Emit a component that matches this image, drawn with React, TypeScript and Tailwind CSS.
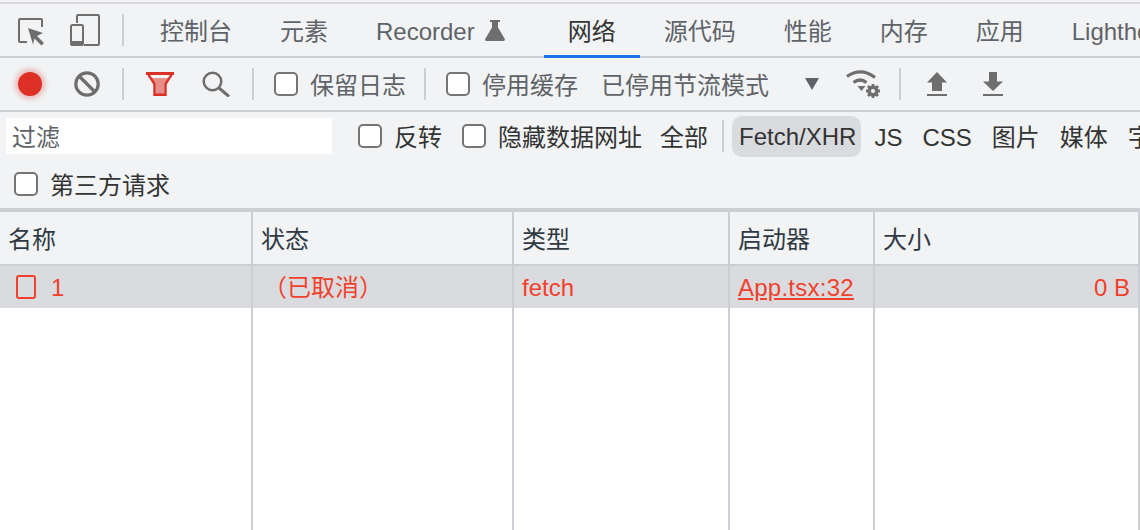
const font = "font-['Liberation_Sans','Noto_Sans_CJK_SC',sans-serif]";

const tabs = [
  { label: "控制台" },
  { label: "元素" },
  { label: "Recorder", flask: true },
  { label: "网络", active: true },
  { label: "源代码" },
  { label: "性能" },
  { label: "内存" },
  { label: "应用" },
  { label: "Lighthouse" },
];

const types = ["CSS", "图片", "媒体", "字体"];

function Separator({ className = "" }: { className?: string }) {
  return <div className={`h-8 w-0.5 shrink-0 bg-[#ccced4] ${className}`} />;
}

function Checkbox({ className = "" }: { className?: string }) {
  return (
    <span
      className={`block h-6 w-6 shrink-0 rounded-[5px] border-2 border-[#757575] bg-white ${className}`}
    />
  );
}

function InspectIcon() {
  return (
    <svg width="28" height="28" viewBox="0 0 28 28" className="mt-1 shrink-0">
      <path d="M9 24H2a1 1 0 0 1-1-1V2a1 1 0 0 1 1-1h21a1 1 0 0 1 1 1v7" fill="none" stroke="#6e6e6e" strokeWidth="2" />
      <path d="M10 10l15 5-6 3 7 7-2.500 2.500-7-7-1.500 6z" fill="#6e6e6e" />
    </svg>
  );
}

function DeviceIcon() {
  return (
    <svg width="30" height="32" viewBox="0 0 30 32" className="shrink-0">
      <path d="M7 9V2a1 1 0 0 1 1-1h20a1 1 0 0 1 1 1v28a1 1 0 0 1-1 1H14" fill="none" stroke="#6e6e6e" strokeWidth="2" />
      <rect x="1" y="11" width="12" height="20" rx="1.500" fill="none" stroke="#6e6e6e" strokeWidth="2" />
      <rect x="1" y="27" width="12" height="5" rx="1" fill="#6e6e6e" />
    </svg>
  );
}

function FlaskIcon() {
  return (
    <svg width="20" height="21" viewBox="0 0 20 21" className="ml-2.5 mr-[15px] shrink-0">
      <path d="M5 0h10v2h-2v5.500l6.500 11a1.500 1.500 0 0 1-1.300 2.500H1.800a1.500 1.500 0 0 1-1.300-2.500L7 7.500V2H5z" fill="#6e6e6e" />
    </svg>
  );
}

function RecordIcon() {
  return (
    <span className="block h-6 w-6 shrink-0 rounded-full bg-[#dc2f25] shadow-[0_0_5px_3px_rgba(220,47,37,0.3)]" />
  );
}

function ClearIcon() {
  return (
    <svg width="28" height="28" viewBox="0 0 28 28" className="shrink-0">
      <circle cx="14" cy="14" r="11.200" fill="none" stroke="#6e6e6e" strokeWidth="3.200" />
      <path d="M6.500 6.500l15 15" stroke="#6e6e6e" strokeWidth="3.200" />
    </svg>
  );
}

function FilterIcon() {
  return (
    <svg width="28" height="24" viewBox="0 0 28 24" className="shrink-0">
      <path d="M5 6h18l-4.500 6v10h-9V12z" fill="#e58e8a" />
      <path d="M1.500 1.200H26.500L19.500 12V22.800H8.500V12z" fill="none" stroke="#dc2f25" strokeWidth="2.400" />
      <path d="M0 0h28v3H0z" fill="#dc2f25" />
    </svg>
  );
}

function SearchIcon() {
  return (
    <svg width="28" height="26" viewBox="0 0 28 26" className="shrink-0">
      <circle cx="10.500" cy="10.500" r="8.800" fill="none" stroke="#6e6e6e" strokeWidth="2.500" />
      <path d="M17 17l10 8.500" stroke="#6e6e6e" strokeWidth="3" />
    </svg>
  );
}

function WifiGearIcon() {
  return (
    <svg width="36" height="28" viewBox="0 0 36 28" className="shrink-0">
      <path d="M1 6.500Q15-3 29 7.500" fill="none" stroke="#6e6e6e" strokeWidth="3.200" />
      <path d="M7.500 12.500Q14 7.500 20.500 12.500" fill="none" stroke="#6e6e6e" strokeWidth="3.200" />
      <path d="M11.500 16h8l-4 5z" fill="#6e6e6e" />
      <circle cx="27" cy="21" r="3.800" fill="none" stroke="#6e6e6e" strokeWidth="3.400" />
      <path d="M27 14v3M27 25v3M20 21h3M31 21h3M22 16l2.200 2.200M29.800 23.800l2.200 2.200M32 16l-2.200 2.200M24.200 23.800L22 26" stroke="#6e6e6e" strokeWidth="2.800" />
    </svg>
  );
}

function UploadIcon() {
  return (
    <svg width="20" height="24" viewBox="0 0 20 24" className="shrink-0">
      <path d="M10 0l10 10.500h-5V19H5v-8.500H0z" fill="#6e6e6e" />
      <rect y="22" width="20" height="2" fill="#6e6e6e" />
    </svg>
  );
}

function DownloadIcon() {
  return (
    <svg width="20" height="24" viewBox="0 0 20 24" className="shrink-0">
      <path d="M6 0h8v9.500h6L10 19 0 9.500h6z" fill="#6e6e6e" />
      <rect y="22" width="20" height="2" fill="#6e6e6e" />
    </svg>
  );
}

function TabBar() {
  return (
    <div className="flex h-[54px] items-stretch overflow-hidden">
      <div className="flex w-[136px] shrink-0 items-center border-b-2 border-[#ccced4] pl-[18px]">
        <InspectIcon />
        <div className="ml-6">
          <DeviceIcon />
        </div>
        <Separator className="ml-[22px]" />
      </div>
      {tabs.map((tab) => (
        <div
          key={tab.label}
          className={`flex shrink-0 items-center px-6 text-2xl ${
            tab.active
              ? "border-b-[3px] border-[#1a73e8] text-[#333333]"
              : "border-b-2 border-[#ccced4] text-[#5f6368]"
          }`}
        >
          <span className="pt-1">{tab.label}</span>
          {tab.flask && <FlaskIcon />}
        </div>
      ))}
    </div>
  );
}

function Toolbar() {
  return (
    <div className="flex h-[54px] items-center overflow-hidden border-b-2 border-[#ccced4] pl-[18px] text-2xl text-[#5f6368]">
      <RecordIcon />
      <div className="ml-[31px]">
        <ClearIcon />
      </div>
      <Separator className="ml-[21px]" />
      <div className="ml-[22px]">
        <FilterIcon />
      </div>
      <div className="ml-[28px]">
        <SearchIcon />
      </div>
      <Separator className="ml-[22px]" />
      <Checkbox className="ml-[20px]" />
      <span className="ml-3 shrink-0 pt-1">保留日志</span>
      <Separator className="ml-[18px]" />
      <Checkbox className="ml-[20px]" />
      <span className="ml-3 shrink-0 pt-1">停用缓存</span>
      <span className="ml-[23px] shrink-0 pt-1">已停用节流模式</span>
      <span className="ml-9 h-0 w-0 shrink-0 border-x-[7px] border-t-[12px] border-x-transparent border-t-[#5f6368]" />
      <div className="ml-[27px]">
        <WifiGearIcon />
      </div>
      <Separator className="ml-[17px]" />
      <div className="ml-[26px]">
        <UploadIcon />
      </div>
      <div className="ml-[36px]">
        <DownloadIcon />
      </div>
    </div>
  );
}

function FilterBar() {
  return (
    <div className="border-b-4 border-[#ccced4] text-2xl text-[#333333]">
      <div className="flex h-[48px] items-center overflow-hidden pl-1.5">
        <div className="flex h-9 w-[326px] shrink-0 items-center bg-white pl-1.5 pt-1 text-[#5f6368]">过滤</div>
        <Checkbox className="ml-[26px]" />
        <span className="ml-3 shrink-0 pt-1">反转</span>
        <Checkbox className="ml-[20px]" />
        <span className="ml-3 shrink-0 pt-1">隐藏数据网址</span>
        <span className="ml-[18px] shrink-0 pt-1">全部</span>
        <Separator className="ml-[14px]" />
        <span className="ml-2 flex h-[41px] shrink-0 items-center rounded-[10px] bg-[#dadbdf] pl-[7px] pr-[5px] pt-0.5">Fetch/XHR</span>
        <span className="ml-[13px] shrink-0 pt-1">JS</span>
        {types.map((type) => (
          <span key={type} className="ml-5 shrink-0 pt-1">
            {type}
          </span>
        ))}
      </div>
      <div className="flex h-[48px] items-center pl-3.5">
        <Checkbox />
        <span className="ml-3 pt-1">第三方请求</span>
      </div>
    </div>
  );
}

const columns = [
  { label: "名称", width: "w-[253px]", pad: "pl-2" },
  { label: "状态", width: "w-[261px]", pad: "pl-2" },
  { label: "类型", width: "w-[216px]", pad: "pl-2" },
  { label: "启动器", width: "w-[145px]", pad: "pl-2" },
  { label: "大小", width: "flex-1", pad: "pl-2" },
];

function Table() {
  const red = "text-[#f1412c]";
  return (
    <div className="flex h-[318px] flex-col text-2xl">
      <div className="flex h-[54px] border-b-2 border-[#ccced4] bg-[#f1f3f5] text-[#303942]">
        {columns.map((col) => (
          <div key={col.label} className={`flex items-center border-r-2 border-[#ccced4] pt-1 ${col.width} ${col.pad}`}>
            {col.label}
          </div>
        ))}
      </div>
      <div className={`flex h-[42px] bg-[#dadbdf] ${red}`}>
        <div className="flex w-[253px] items-center border-r-2 border-[#ccced4] pl-4">
          <span className="block h-6 w-5 rounded-[3px] border-2 border-[#f1412c]" />
          <span className="ml-[15px] pt-0.5">1</span>
        </div>
        <div className="flex w-[261px] items-center border-r-2 border-[#ccced4] pl-2.5 pt-0.5">（已取消）</div>
        <div className="flex w-[216px] items-center border-r-2 border-[#ccced4] pl-2 pt-0.5">fetch</div>
        <div className="flex w-[145px] items-center border-r-2 border-[#ccced4] pl-2 pt-0.5 tracking-[0.25px] underline">App.tsx:32</div>
        <div className="flex flex-1 items-center justify-end border-r-2 border-[#ccced4] pr-2 pt-0.5">0 B</div>
      </div>
      <div className="flex flex-1 bg-white">
        {columns.map((col) => (
          <div key={col.label} className={`border-r-2 border-[#ccced4] ${col.width}`} />
        ))}
      </div>
    </div>
  );
}

export default function App() {
  return (
    <div className={`h-[530px] w-[1140px] overflow-hidden bg-[#f1f3f5] pt-0.5 ${font}`}>
      <div className="border-t-2 border-[#d8d8da]">
        <TabBar />
        <Toolbar />
        <FilterBar />
        <Table />
      </div>
    </div>
  );
}
